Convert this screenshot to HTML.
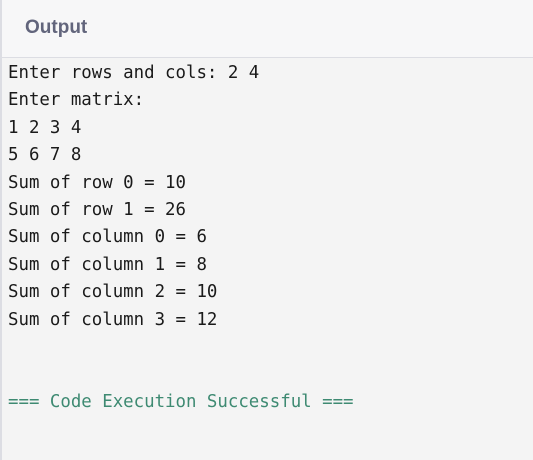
<!DOCTYPE html><html><head><style>
html,body{margin:0;padding:0;width:533px;height:460px;overflow:hidden;background:#f4f4f4}
.wrap{position:absolute;left:0;top:0;width:531px;height:460px;border-left:2px solid #dcdde3}
.hd{height:57px;background:#f7f7f8;border-bottom:1px solid #dcdde3;position:relative}
.hd span{position:absolute;left:23px;top:17px;font:600 19px "Liberation Sans",sans-serif;color:#62657c}
pre{margin:0;position:absolute;left:6px;top:60px;font:17.4px/27.4px "DejaVu Sans Mono",monospace;color:#1a1a1a}
.ok{color:#3e8a72}
</style></head><body><div class="wrap"><div class="hd"><span>Output</span></div>
<pre>Enter rows and cols: 2 4
Enter matrix:
1 2 3 4
5 6 7 8
Sum of row 0 = 10
Sum of row 1 = 26
Sum of column 0 = 6
Sum of column 1 = 8
Sum of column 2 = 10
Sum of column 3 = 12


<span class="ok">=== Code Execution Successful ===</span></pre></div></body></html>
